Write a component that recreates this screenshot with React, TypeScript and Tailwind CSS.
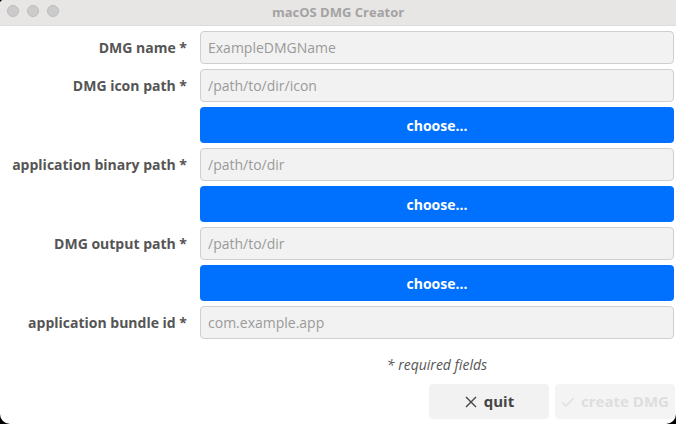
import React from "react";

const font = { fontFamily: '"Open Sans", "Noto Sans", sans-serif' };

function Label({ children }: { children: React.ReactNode }) {
  return (
    <div className="flex h-[33px] items-center justify-end pr-[1px] text-[14px] font-bold text-[#555555]">
      {children}
    </div>
  );
}

function Input({ placeholder }: { placeholder: string }) {
  return (
    <div className="flex h-[33px] items-center rounded-[4px] border border-[#cfcfcf] bg-[#f2f2f2] px-[7px] text-[14px] text-[#9a9a9a]">
      {placeholder}
    </div>
  );
}

function Choose() {
  return (
    <div className="flex h-[36px] items-center justify-center rounded-[4px] bg-[#0070ff] text-[14px] font-bold text-white">
      choose...
    </div>
  );
}

export default function App() {
  return (
    <div className="h-[424px] w-[676px] bg-black" style={font}>
      <div className="flex h-full w-full flex-col overflow-hidden rounded-tl-[4px] rounded-b-[10px] bg-white">
        <div className="relative flex h-[26px] shrink-0 items-center justify-center border-b border-[#dcdcdc] bg-[#e8e6e4]">
          <div className="absolute left-[7px] top-[5px] flex gap-[8px]">
            <div className="h-[12px] w-[12px] rounded-full border border-[#bdbdbd] bg-[#cbcbcb]" />
            <div className="h-[12px] w-[12px] rounded-full border border-[#bdbdbd] bg-[#cbcbcb]" />
            <div className="h-[12px] w-[12px] rounded-full border border-[#bdbdbd] bg-[#cbcbcb]" />
          </div>
          <div className="text-[13px] font-bold text-[#a3a3a3]">macOS DMG Creator</div>
        </div>
        <div className="grid grid-cols-[188px_1fr] gap-x-[12px] gap-y-[5px] pl-0 pr-[2px] pt-[5px]">
          <Label>DMG name *</Label>
          <Input placeholder="ExampleDMGName" />
          <Label>DMG icon path *</Label>
          <Input placeholder="/path/to/dir/icon" />
          <div />
          <Choose />
          <Label>application binary path *</Label>
          <Input placeholder="/path/to/dir" />
          <div />
          <Choose />
          <Label>DMG output path *</Label>
          <Input placeholder="/path/to/dir" />
          <div />
          <Choose />
          <Label>application bundle id *</Label>
          <Input placeholder="com.example.app" />
          <div />
          <div className="flex h-[40px] items-center justify-center text-[14px] italic text-[#555555]">
            * required fields
          </div>
        </div>
        <div className="flex justify-end gap-[6px] pr-[1px]">
          <div className="flex h-[35px] w-[120px] items-center justify-center gap-[6px] rounded-[4px] bg-[#f2f2f2] text-[15px] font-bold text-[#444444]">
            <svg width="14" height="14" viewBox="0 0 14 14" fill="none" stroke="#444" strokeWidth="1.4">
              <path d="M2 2 L12 12 M12 2 L2 12" />
            </svg>
            quit
          </div>
          <div className="flex h-[35px] w-[120px] items-center justify-center gap-[6px] rounded-[4px] bg-[#f4f4f4] text-[15px] font-bold text-[#dedede]">
            <svg width="14" height="14" viewBox="0 0 14 14" fill="none" stroke="#dedede" strokeWidth="1.4">
              <path d="M1.5 7.5 L5 11 L12.5 3" />
            </svg>
            create DMG
          </div>
        </div>
      </div>
    </div>
  );
}
